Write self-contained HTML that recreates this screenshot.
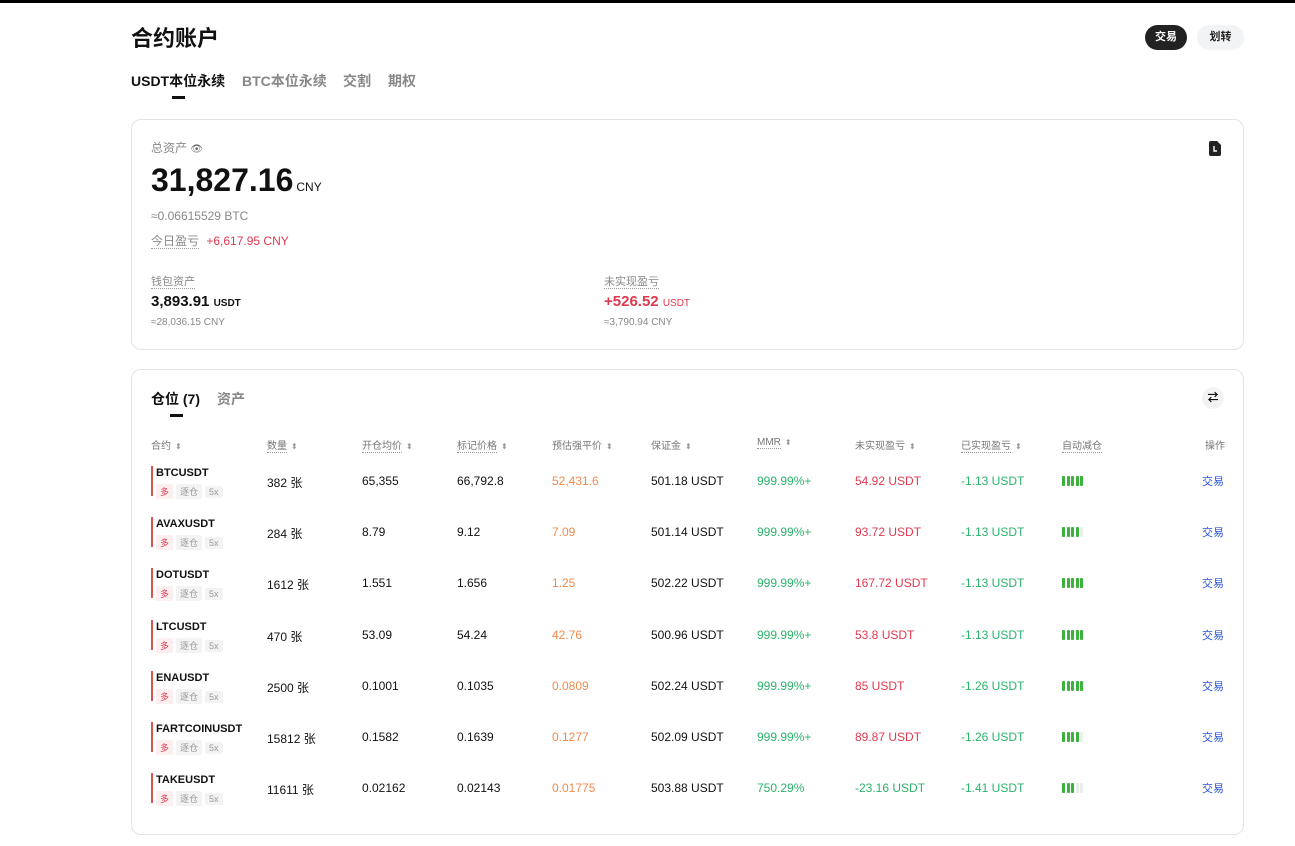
<!DOCTYPE html><html><head><meta charset="utf-8"><style>
*{margin:0;padding:0;box-sizing:border-box}
body{width:1295px;height:846px;background:#fff;font-family:"Liberation Sans","Noto Sans CJK SC",sans-serif;color:#111;position:relative;overflow:hidden}
.a{position:absolute;white-space:nowrap}
.card{position:absolute;left:131px;width:1113px;border:1px solid #e4e4e4;border-radius:10px}
.g{color:#888}.red{color:#e0394f}.grn{color:#2bb36b}.org{color:#f08a4b}.blu{color:#2a56d6}
.u{border-bottom:1px dotted #999}
.th{font-size:10px;color:#777;top:437px}
.ar{font-size:8px;color:#999;margin-left:4px}
.row{font-size:12px}
.tag{display:inline-block;background:#f3f3f4;color:#999;font-size:9px;padding:1px 4px;border-radius:2px;margin-right:3px}
.tag.r{background:#fdeff0;color:#e0394f}
.bars span{display:inline-block;width:3px;height:10px;background:#3bb23b;margin-right:1.5px;border-radius:1px}
.bars span.o{background:#e8efe8}
</style></head><body>
<div class="a" style="left:0;top:0;width:1295px;height:3px;background:#000"></div>
<div class="a" style="left:131px;top:21px;font-size:22px;font-weight:bold">合约账户</div>
<div class="a" style="left:1145px;top:25px;width:42px;height:25px;border-radius:13px;background:#222;color:#fff;font-size:11px;font-weight:bold;text-align:center;line-height:25px">交易</div>
<div class="a" style="left:1197px;top:25px;width:47px;height:25px;border-radius:13px;background:#f2f3f5;color:#222;font-size:11px;font-weight:bold;text-align:center;line-height:25px">划转</div>
<div class="a" style="left:131px;top:71px;font-size:14px;font-weight:bold">USDT本位永续</div>
<div class="a" style="left:242px;top:71px;font-size:14px;font-weight:bold;color:#888">BTC本位永续</div>
<div class="a" style="left:343px;top:71px;font-size:14px;font-weight:bold;color:#888">交割</div>
<div class="a" style="left:388px;top:71px;font-size:14px;font-weight:bold;color:#888">期权</div>
<div class="a" style="left:172px;top:96px;width:13px;height:3px;background:#111"></div>

<div class="card" style="top:119px;height:231px"></div>
<div class="a g" style="left:151px;top:139px;font-size:12px">总资产 <span style="font-size:10px;color:#666">👁</span></div>
<svg class="a" style="left:1208px;top:141px" width="14" height="15"><path d="M1 2a2 2 0 012-2h6l4 4v9a2 2 0 01-2 2H3a2 2 0 01-2-2z" fill="#222"/><path d="M6 5v5h3" stroke="#fff" stroke-width="1.4" fill="none"/></svg>
<div class="a" style="left:151px;top:162px;font-size:32px;font-weight:bold">31,827.16<span style="font-size:12px;font-weight:normal;margin-left:3px">CNY</span></div>
<div class="a g" style="left:151px;top:209px;font-size:12px">≈0.06615529 BTC</div>
<div class="a" style="left:151px;top:232px;font-size:12px"><span class="g u">今日盈亏</span> <span class="red" style="margin-left:4px">+6,617.95 CNY</span></div>
<div class="a g" style="left:151px;top:273px;font-size:11px"><span class="u">钱包资产</span></div>
<div class="a" style="left:151px;top:293px;font-size:15px;font-weight:bold">3,893.91 <span style="font-size:10px">USDT</span></div>
<div class="a g" style="left:151px;top:317px;font-size:10px">≈28,036.15 CNY</div>
<div class="a g" style="left:604px;top:273px;font-size:11px"><span class="u">未实现盈亏</span></div>
<div class="a red" style="left:604px;top:293px;font-size:15px;font-weight:bold">+526.52 <span style="font-size:10px;font-weight:normal">USDT</span></div>
<div class="a g" style="left:604px;top:317px;font-size:10px">≈3,790.94 CNY</div>

<div class="card" style="top:369px;height:466px"></div>
<div class="a" style="left:151px;top:389px;font-size:14px;font-weight:bold">仓位 (7)</div>
<div class="a" style="left:217px;top:389px;font-size:14px;font-weight:bold;color:#888">资产</div>
<div class="a" style="left:170px;top:414px;width:13px;height:3px;background:#111"></div>
<div class="a" style="left:1202px;top:387px;width:22px;height:22px;border-radius:11px;background:#f3f3f4;font-size:11px;text-align:center;line-height:22px;font-weight:bold">⇄</div>

<div class="a th" style="left:151px">合约<span class="ar">⬍</span></div>
<div class="a th" style="left:267px"><span class="u">数量</span><span class="ar">⬍</span></div>
<div class="a th" style="left:362px"><span class="u">开仓均价</span><span class="ar">⬍</span></div>
<div class="a th" style="left:457px"><span class="u">标记价格</span><span class="ar">⬍</span></div>
<div class="a th" style="left:552px">预估强平价<span class="ar">⬍</span></div>
<div class="a th" style="left:651px">保证金<span class="ar">⬍</span></div>
<div class="a th" style="left:757px"><span class="u">MMR</span><span class="ar">⬍</span></div>
<div class="a th" style="left:855px">未实现盈亏<span class="ar">⬍</span></div>
<div class="a th" style="left:961px"><span class="u">已实现盈亏</span><span class="ar">⬍</span></div>
<div class="a th" style="left:1062px"><span class="u">自动减仓</span></div>
<div class="a th" style="left:1205px">操作</div>

<div id="rows"></div>
<script>
var d=[["BTCUSDT","382 张","65,355","66,792.8","52,431.6","501.18 USDT","999.99%+","54.92 USDT","-1.13 USDT",5],
["AVAXUSDT","284 张","8.79","9.12","7.09","501.14 USDT","999.99%+","93.72 USDT","-1.13 USDT",4],
["DOTUSDT","1612 张","1.551","1.656","1.25","502.22 USDT","999.99%+","167.72 USDT","-1.13 USDT",5],
["LTCUSDT","470 张","53.09","54.24","42.76","500.96 USDT","999.99%+","53.8 USDT","-1.13 USDT",5],
["ENAUSDT","2500 张","0.1001","0.1035","0.0809","502.24 USDT","999.99%+","85 USDT","-1.26 USDT",5],
["FARTCOINUSDT","15812 张","0.1582","0.1639","0.1277","502.09 USDT","999.99%+","89.87 USDT","-1.26 USDT",4],
["TAKEUSDT","11611 张","0.02162","0.02143","0.01775","503.88 USDT","750.29%","-23.16 USDT","-1.41 USDT",3]];
var h="";d.forEach(function(r,i){var y=481+i*51.2;var t=y-7;
h+='<div class="a" style="left:151px;top:'+(y-15)+'px;width:2px;height:30px;background:#d9534f"></div>';
h+='<div class="a" style="left:156px;top:'+(y-14)+'px;font-size:11px;font-weight:bold">'+r[0]+'</div>';
h+='<div class="a" style="left:156px;top:'+(y+1)+'px"><span class="tag r">多</span><span class="tag">逐仓</span><span class="tag">5x</span></div>';
var xs=[267,362,457,552,651,757,855,961],cl=["","","","org","","grn",r[7][0]=="-"?"grn":"red","grn"];
for(var k=0;k<8;k++)h+='<div class="a row '+cl[k]+'" style="left:'+xs[k]+'px;top:'+t+'px">'+r[k+1]+'</div>';
var b="";for(var j=0;j<5;j++)b+='<span'+(j>=r[9]?' class="o"':'')+'></span>';
h+='<div class="a bars" style="left:1062px;top:'+(y-5)+'px;line-height:0">'+b+'</div>';
h+='<div class="a blu" style="left:1202px;top:'+(t-1)+'px;font-size:11px">交易</div>';});
document.getElementById("rows").innerHTML=h;
</script>
</body></html>
